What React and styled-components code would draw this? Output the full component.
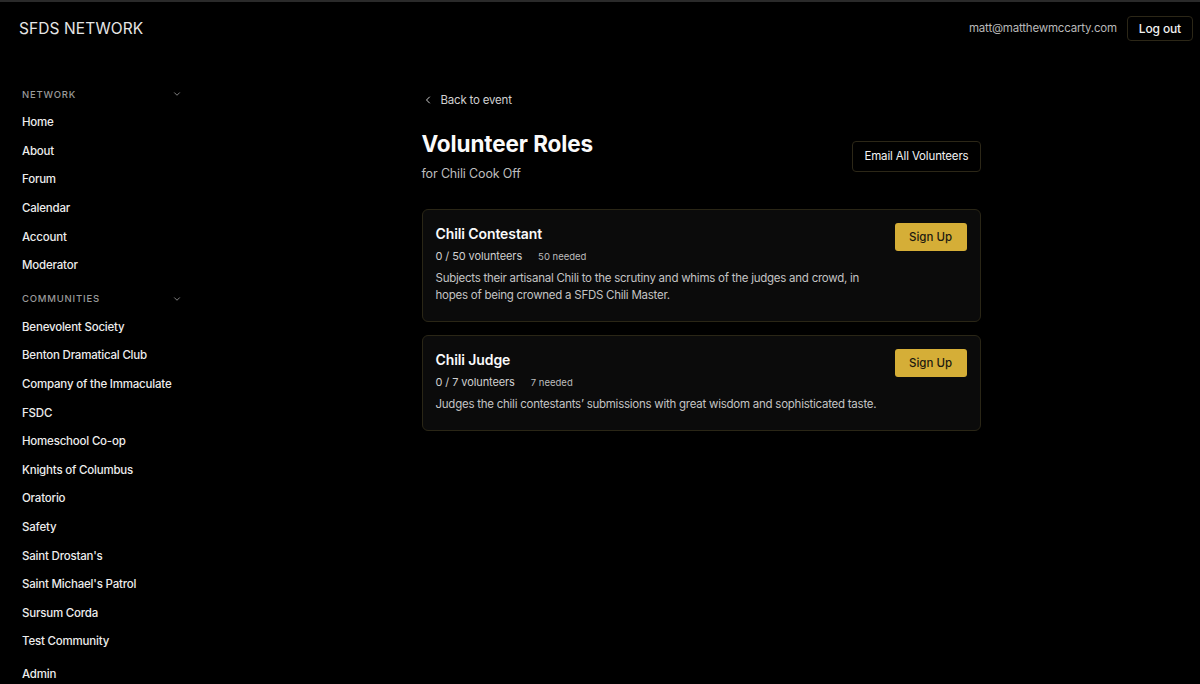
import React from "react";
import styled, { createGlobalStyle } from "styled-components";

const Global = createGlobalStyle`
  html, body { margin: 0; padding: 0; background: #000; }
  body { font-family: Inter, "Noto Sans", "Liberation Sans", sans-serif; color: #f2f2f2; -webkit-font-smoothing: antialiased; }
  * { box-sizing: border-box; }
`;

const Page = styled.div`
  min-height: 684px;
  background: #000;
  border-top: 2px solid #2a2a2a;
  display: flex;
  flex-direction: column;
`;

const Header = styled.header`
  height: 52px;
  display: flex;
  align-items: center;
  justify-content: space-between;
  padding: 0 7px 0 19px;
`;

const Brand = styled.div`
  font-size: 15.5px;
  font-weight: 400;
  letter-spacing: 0.1px;
  color: #e6e6e6;
`;

const UserArea = styled.div`
  display: flex;
  align-items: center;
  gap: 10px;
`;

const Email = styled.span`
  font-size: 11.5px;
  letter-spacing: -0.2px;
  color: #b8b8b8;
`;

const OutlineButton = styled.button`
  font-family: inherit;
  background: #000;
  color: #f2f2f2;
  border: 1px solid #2c2717;
  border-radius: 4px;
  font-size: ${(p) => p.$size || 12}px;
  font-weight: ${(p) => p.$weight || 500};
  letter-spacing: -0.15px;
  height: ${(p) => p.$h || 24}px;
  padding: 0 ${(p) => p.$px || 12}px;
  cursor: pointer;
`;

const Body = styled.div`
  display: flex;
  flex: 1;
`;

const Sidebar = styled.nav`
  width: 202px;
  flex-shrink: 0;
  padding: 26px 20px 0 22px;
  display: flex;
  flex-direction: column;
`;

const SectionHead = styled.div`
  display: flex;
  align-items: center;
  justify-content: space-between;
  height: 28px;
  margin-top: ${(p) => p.$mt || 0}px;
  font-size: 9.5px;
  font-weight: 500;
  letter-spacing: 0.8px;
  color: #9a9a9a;
  text-transform: uppercase;
`;

const NavItem = styled.a`
  display: flex;
  align-items: center;
  height: 28.6px;
  font-size: 11.5px;
  font-weight: 500;
  letter-spacing: -0.2px;
  color: #ededed;
  text-decoration: none;
  margin-top: ${(p) => p.$mt || 0}px;
`;

const Main = styled.main`
  flex: 1;
  display: flex;
  justify-content: center;
  padding: 38px 0 40px;
`;

const Content = styled.div`
  width: 559px;
`;

const BackLink = styled.a`
  display: flex;
  align-items: center;
  gap: 7px;
  height: 18px;
  font-size: 11.5px;
  letter-spacing: -0.2px;
  color: #d0d0d0;
  text-decoration: none;
  padding-left: 0;
  margin-top: -1px;
`;

const TitleRow = styled.div`
  margin-top: 20px;
  display: flex;
  align-items: center;
  justify-content: space-between;
`;

const TitleBlock = styled.div`
  display: flex;
  flex-direction: column;
`;

const Title = styled.h1`
  margin: 0;
  font-size: 22.5px;
  font-weight: 700;
  letter-spacing: -0.1px;
  line-height: 30px;
  color: #fafafa;
`;

const Subtitle = styled.div`
  margin-top: 6px;
  font-size: 12.5px;
  letter-spacing: -0.15px;
  line-height: 18px;
  color: #bdbdbd;
`;

const RoleList = styled.div`
  margin-top: 26px;
  display: flex;
  flex-direction: column;
  gap: 13px;
`;

const Card = styled.div`
  background: #0b0b0b;
  border: 1px solid #2a2616;
  border-radius: 6px;
  padding: 13px 13px 17px 13px;
  display: flex;
  gap: 12px;
  align-items: flex-start;
`;

const CardText = styled.div`
  flex: 1;
  min-width: 0;
`;

const RoleName = styled.h2`
  margin: 0;
  font-size: 14px;
  font-weight: 600;
  letter-spacing: -0.1px;
  line-height: 22px;
  color: #fafafa;
`;

const Stats = styled.div`
  margin-top: 1px;
  display: flex;
  align-items: baseline;
  gap: 16px;
  line-height: 20px;
`;

const Count = styled.span`
  font-size: 11px;
  letter-spacing: -0.1px;
  color: #d0d0d0;
`;

const Needed = styled.span`
  font-size: 9.5px;
  color: #bcbcbc;
`;

const Desc = styled.p`
  margin: 3px 0 0;
  font-size: 11.5px;
  letter-spacing: -0.25px;
  line-height: 17px;
  color: #c4c4c4;
`;

const SignUp = styled.button`
  font-family: inherit;
  flex-shrink: 0;
  width: 72px;
  height: 28px;
  background: #d5ae37;
  border: none;
  border-radius: 3px;
  color: #1d1a10;
  font-size: 11.5px;
  font-weight: 500;
  cursor: pointer;
`;

const Chevron = ({ dir = "down", size = 10, color = "#9a9a9a" }) => (
  <svg width={size} height={size} viewBox="0 0 24 24" fill="none" stroke={color} strokeWidth="2" strokeLinecap="round" strokeLinejoin="round">
    {dir === "down" ? <path d="m6 9 6 6 6-6" /> : <path d="m15 18-6-6 6-6" />}
  </svg>
);

const network = ["Home", "About", "Forum", "Calendar", "Account", "Moderator"];
const communities = [
  "Benevolent Society",
  "Benton Dramatical Club",
  "Company of the Immaculate",
  "FSDC",
  "Homeschool Co-op",
  "Knights of Columbus",
  "Oratorio",
  "Safety",
  "Saint Drostan's",
  "Saint Michael's Patrol",
  "Sursum Corda",
  "Test Community",
];

const roles = [
  {
    name: "Chili Contestant",
    count: "0 / 50 volunteers",
    needed: "50 needed",
    desc: "Subjects their artisanal Chili to the scrutiny and whims of the judges and crowd, in hopes of being crowned a SFDS Chili Master.",
  },
  {
    name: "Chili Judge",
    count: "0 / 7 volunteers",
    needed: "7 needed",
    desc: "Judges the chili contestants’ submissions with great wisdom and sophisticated taste.",
  },
];

export default function App() {
  return (
    <>
      <Global />
      <Page>
        <Header>
          <Brand>SFDS NETWORK</Brand>
          <UserArea>
            <Email>matt@matthewmccarty.com</Email>
            <OutlineButton $size={12} $h={25} $px={11}>Log out</OutlineButton>
          </UserArea>
        </Header>
        <Body>
          <Sidebar>
            <SectionHead>
              Network
              <Chevron />
            </SectionHead>
            {network.map((n) => (
              <NavItem key={n} href="#">{n}</NavItem>
            ))}
            <SectionHead $mt={5}>
              Communities
              <Chevron />
            </SectionHead>
            {communities.map((n) => (
              <NavItem key={n} href="#">{n}</NavItem>
            ))}
            <NavItem href="#" $mt={4}>Admin</NavItem>
          </Sidebar>
          <Main>
            <Content>
              <BackLink href="#">
                <Chevron dir="left" size={12} color="#cfcfcf" />
                Back to event
              </BackLink>
              <TitleRow>
                <TitleBlock>
                  <Title>Volunteer Roles</Title>
                  <Subtitle>for Chili Cook Off</Subtitle>
                </TitleBlock>
                <OutlineButton $size={11.5} $weight={400} $h={31} $px={11}>Email All Volunteers</OutlineButton>
              </TitleRow>
              <RoleList>
                {roles.map((r) => (
                  <Card key={r.name}>
                    <CardText>
                      <RoleName>{r.name}</RoleName>
                      <Stats>
                        <Count>{r.count}</Count>
                        <Needed>{r.needed}</Needed>
                      </Stats>
                      <Desc>{r.desc}</Desc>
                    </CardText>
                    <SignUp>Sign Up</SignUp>
                  </Card>
                ))}
              </RoleList>
            </Content>
          </Main>
        </Body>
      </Page>
    </>
  );
}
